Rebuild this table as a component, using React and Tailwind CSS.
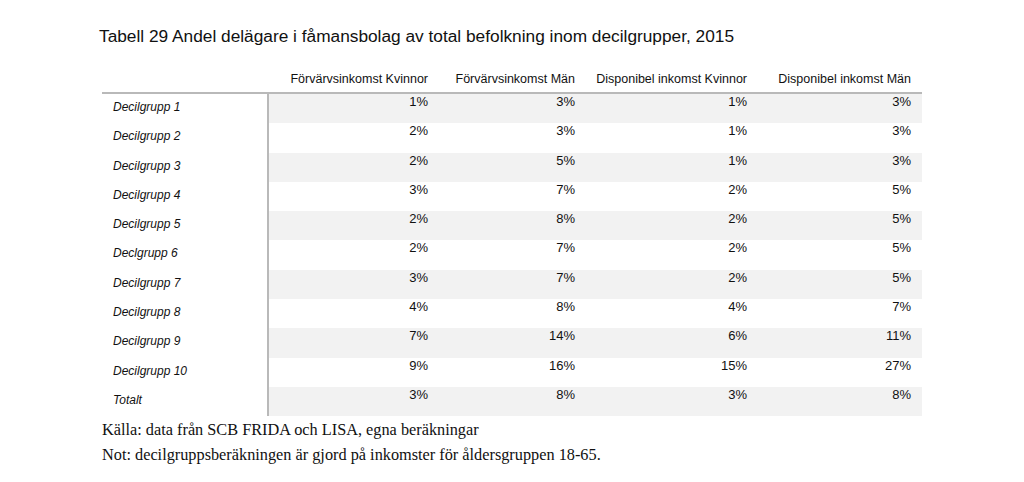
import React from 'react';

const rows = [
  ['Decilgrupp 1', '1%', '3%', '1%', '3%'],
  ['Decilgrupp 2', '2%', '3%', '1%', '3%'],
  ['Decilgrupp 3', '2%', '5%', '1%', '3%'],
  ['Decilgrupp 4', '3%', '7%', '2%', '5%'],
  ['Decilgrupp 5', '2%', '8%', '2%', '5%'],
  ['Declgrupp 6', '2%', '7%', '2%', '5%'],
  ['Decilgrupp 7', '3%', '7%', '2%', '5%'],
  ['Decilgrupp 8', '4%', '8%', '4%', '7%'],
  ['Decilgrupp 9', '7%', '14%', '6%', '11%'],
  ['Decilgrupp 10', '9%', '16%', '15%', '27%'],
  ['Totalt', '3%', '8%', '3%', '8%'],
];

const headers = [
  'Förvärvsinkomst Kvinnor',
  'Förvärvsinkomst Män',
  'Disponibel inkomst Kvinnor',
  'Disponibel inkomst Män',
];

const App = () => {
  return (
    <div className="w-[1024px] h-[482px] bg-white overflow-hidden pl-[102px] pt-[26px] text-[#111]" style={{ fontFamily: '"Liberation Sans", Arial, sans-serif' }}>
      <h1 className="text-[17.3px] leading-[20px] -ml-[3px]">
        Tabell 29 Andel delägare i fåmansbolag av total befolkning inom decilgrupper, 2015
      </h1>

      {/* header row */}
      <div className="mt-[26px] grid grid-cols-[167px_170px_147px_172px_164px] w-[820px] border-b-2 border-[#b9b9b9] h-[22px]">
        <div />
        {headers.map((h) => (
          <div key={h} className="text-right pr-[11px] text-[12.5px] leading-[14px] whitespace-nowrap">
            {h}
          </div>
        ))}
      </div>

      {/* body */}
      <div className="w-[820px]">
        {rows.map((r, i) => (
          <div key={r[0]} className="grid grid-cols-[167px_653px] h-[29.3px]">
            <div className="border-r-2 border-[#b9b9b9] pl-[11px] pt-[6px] text-[12px] leading-[14px] italic">
              {r[0]}
            </div>
            <div className={`grid grid-cols-[170px_147px_172px_164px] ${i % 2 === 0 ? 'bg-[#f2f2f2]' : 'bg-white'}`}>
              {r.slice(1).map((v, j) => (
                <div key={j} className="text-right pr-[11px] pt-[1px] text-[13px] leading-[14px]">
                  {v}
                </div>
              ))}
            </div>
          </div>
        ))}
      </div>

      {/* notes */}
      <div className="mt-[1px] text-[16.3px] leading-[25px] text-[#111]" style={{ fontFamily: '"Liberation Serif", "Times New Roman", serif' }}>
        <p>Källa: data från SCB FRIDA och LISA, egna beräkningar</p>
        <p>Not: decilgruppsberäkningen är gjord på inkomster för åldersgruppen 18-65.</p>
      </div>
    </div>
  );
};

export default App;
